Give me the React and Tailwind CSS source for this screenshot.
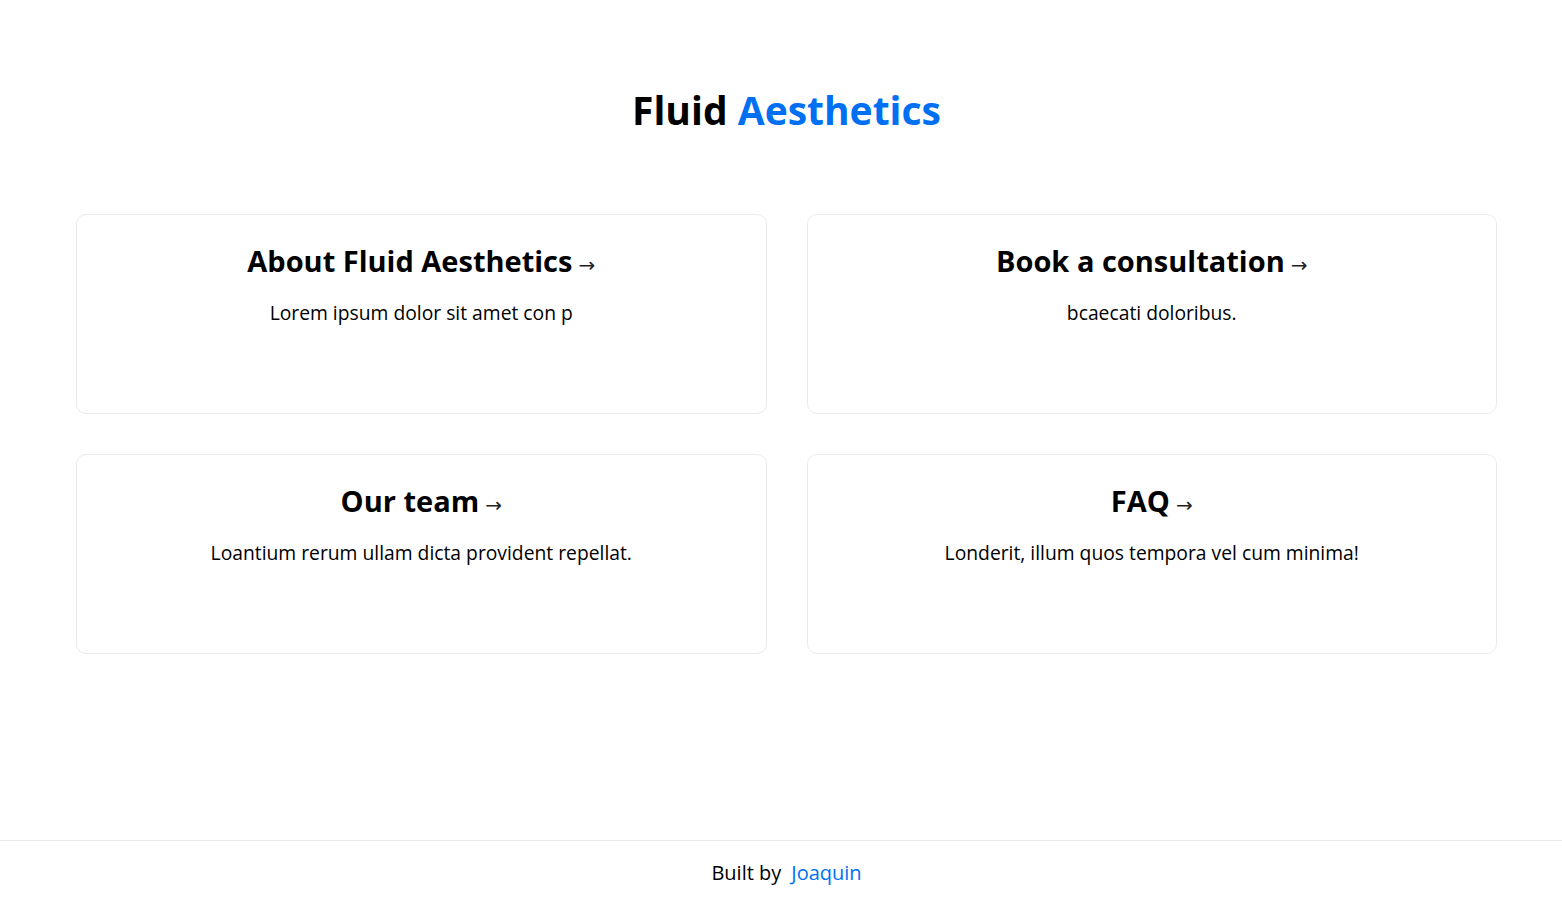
const cards = [
    { title: "About Fluid Aesthetics", text: "Lorem ipsum dolor sit amet con p" },
    { title: "Book a consultation", text: "bcaecati doloribus." },
    { title: "Our team", text: "Loantium rerum ullam dicta provident repellat." },
    { title: "FAQ", text: "Londerit, illum quos tempora vel cum minima!" },
];

// Card Component
function Card({ title, text }) {
    return (
        <a href="#" className="block h-[200px] rounded-[10px] border border-[#eaeaea] px-6 pt-[26px] text-center text-black">
            <h2 className="text-[29px] font-bold leading-[40px]">
                {title}
                <span className="ml-1.5 font-['DejaVu_Sans',sans-serif] text-[20px] font-normal text-[#222]">→</span>
            </h2>
            <p className="mt-[15px] text-[19.3px] leading-[26px]">{text}</p>
        </a>
    );
}

export default function App() {
    return (
        <div className="flex min-h-[904px] flex-col bg-white pl-[11px] font-['Open_Sans',sans-serif] text-black">
            <main className="flex flex-1 flex-col items-center pt-[82px]">
                <h1 className="text-[39px] font-bold leading-[56px]">
                    Fluid <span className="text-[#0070f3]">Aesthetics</span>
                </h1>
                <div className="mt-[76px] grid w-full grid-cols-2 gap-10 px-[65px]">
                    {cards.map((c) => (
                        <Card key={c.title} title={c.title} text={c.text} />
                    ))}
                </div>
            </main>
            <footer className="-ml-[11px] flex h-[64px] items-center justify-center border-t border-[#eaeaea] pl-[11px] text-[20px]">
                Built by
                <a href="#" className="ml-2.5 text-[#0070f3]">Joaquin</a>
            </footer>
        </div>
    );
}
